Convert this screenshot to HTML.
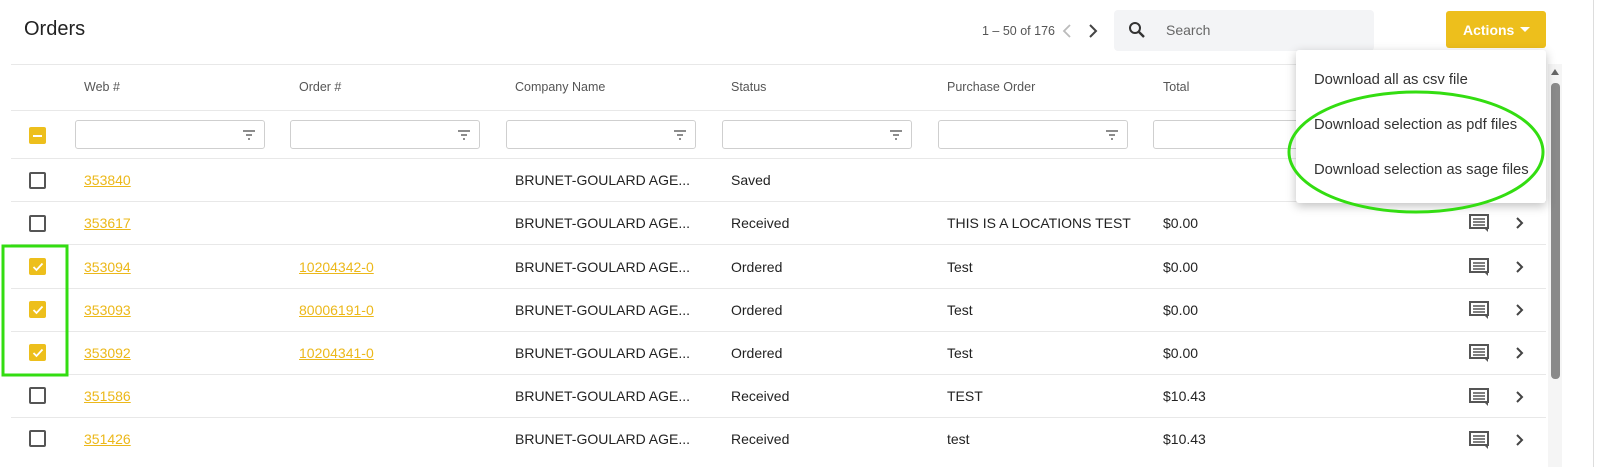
<!DOCTYPE html>
<html><head><style>
*{box-sizing:border-box;margin:0;padding:0}
body{width:1599px;height:467px;overflow:hidden;background:#fff;font-family:"Liberation Sans",sans-serif;color:#222;position:relative}
.a{position:absolute}
.t{font-size:14px;white-space:nowrap}
.h{font-size:12.5px;color:#555}
.hl{position:absolute;left:11px;width:1535px;height:1px;background:#e8e8e8}
.cb{position:absolute;left:29px;width:17px;height:17px;border:2px solid #555;border-radius:2px}
.cbk{background:#edbf1c;border-color:#edbf1c}
.lnk{color:#ecb81a;text-decoration:underline}
.fi{position:absolute;top:120px;height:29px;width:190px;border:1px solid #cfcfcf;border-radius:3px}
.fi svg{position:absolute;right:8px;top:8px}
</style></head><body>
<div class="a" style="left:24px;top:18px;font-size:20px;color:#222">Orders</div>
<div class="a" style="left:982px;top:24px;font-size:12.5px;color:#555">1 – 50 of 176</div>
<svg class="a" style="left:1060px;top:22px" width="14" height="18"><path d="M10 3L4 9l6 6" fill="none" stroke="#bbb" stroke-width="1.8"/></svg>
<svg class="a" style="left:1086px;top:22px" width="14" height="18"><path d="M4 3l6 6-6 6" fill="none" stroke="#444" stroke-width="2"/></svg>
<div class="a" style="left:1114px;top:10px;width:260px;height:41px;background:#f3f4f6;border-radius:4px"></div>
<svg class="a" style="left:1128px;top:21px" width="18" height="18"><circle cx="7" cy="7" r="5" fill="none" stroke="#333" stroke-width="2"/><path d="M11 11l5 5" stroke="#333" stroke-width="2.4"/></svg>
<div class="a t" style="left:1166px;top:22px;color:#666">Search</div>
<div class="a" style="left:1446px;top:11px;width:100px;height:37px;background:#edbf1c;border-radius:3px"></div>
<div class="a" style="left:1463px;top:22px;font-size:14px;font-weight:bold;color:#fff">Actions</div>
<svg class="a" style="left:1520px;top:27px" width="10" height="6"><path d="M0 0h10L5 5z" fill="#fff"/></svg>

<div class="hl" style="top:64px"></div>
<div class="a h" style="left:84px;top:80px">Web #</div>
<div class="a h" style="left:299px;top:80px">Order #</div>
<div class="a h" style="left:515px;top:80px">Company Name</div>
<div class="a h" style="left:731px;top:80px">Status</div>
<div class="a h" style="left:947px;top:80px">Purchase Order</div>
<div class="a h" style="left:1163px;top:80px">Total</div>
<div class="hl" style="top:110px"></div>
<div class="cb cbk" style="top:127px;border-radius:2px"><div style="position:absolute;left:2px;top:5.5px;width:9px;height:2px;background:#fff"></div></div>
<div class="fi" style="left:75px"><svg width="14" height="12"><path d="M1 2h12M4 6h6M6 10h2" stroke="#666" stroke-width="1.4"/></svg></div>
<div class="fi" style="left:290px"><svg width="14" height="12"><path d="M1 2h12M4 6h6M6 10h2" stroke="#666" stroke-width="1.4"/></svg></div>
<div class="fi" style="left:506px"><svg width="14" height="12"><path d="M1 2h12M4 6h6M6 10h2" stroke="#666" stroke-width="1.4"/></svg></div>
<div class="fi" style="left:722px"><svg width="14" height="12"><path d="M1 2h12M4 6h6M6 10h2" stroke="#666" stroke-width="1.4"/></svg></div>
<div class="fi" style="left:938px"><svg width="14" height="12"><path d="M1 2h12M4 6h6M6 10h2" stroke="#666" stroke-width="1.4"/></svg></div>
<div class="fi" style="left:1153px"></div>
<div class="hl" style="top:158px"></div>

<div class="cb" style="top:172px"></div><div class="a t lnk" style="left:84px;top:172px">353840</div><div class="a t" style="left:515px;top:172px">BRUNET-GOULARD AGE...</div><div class="a t" style="left:731px;top:172px">Saved</div>
<div class="hl" style="top:201px"></div>
<div class="cb" style="top:215px"></div><div class="a t lnk" style="left:84px;top:215px">353617</div><div class="a t" style="left:515px;top:215px">BRUNET-GOULARD AGE...</div><div class="a t" style="left:731px;top:215px">Received</div><div class="a t" style="left:947px;top:215px">THIS IS A LOCATIONS TEST</div><div class="a t" style="left:1163px;top:215px">$0.00</div>
<div class="hl" style="top:244px"></div>
<div class="cb cbk" style="top:258px"><svg style="position:absolute;left:1px;top:1px" width="12" height="12"><path d="M1.5 6l3 3 6-6.5" fill="none" stroke="#fff" stroke-width="1.8"/></svg></div><div class="a t lnk" style="left:84px;top:259px">353094</div><div class="a t lnk" style="left:299px;top:259px">10204342-0</div><div class="a t" style="left:515px;top:259px">BRUNET-GOULARD AGE...</div><div class="a t" style="left:731px;top:259px">Ordered</div><div class="a t" style="left:947px;top:259px">Test</div><div class="a t" style="left:1163px;top:259px">$0.00</div>
<div class="hl" style="top:288px"></div>
<div class="cb cbk" style="top:301px"><svg style="position:absolute;left:1px;top:1px" width="12" height="12"><path d="M1.5 6l3 3 6-6.5" fill="none" stroke="#fff" stroke-width="1.8"/></svg></div><div class="a t lnk" style="left:84px;top:302px">353093</div><div class="a t lnk" style="left:299px;top:302px">80006191-0</div><div class="a t" style="left:515px;top:302px">BRUNET-GOULARD AGE...</div><div class="a t" style="left:731px;top:302px">Ordered</div><div class="a t" style="left:947px;top:302px">Test</div><div class="a t" style="left:1163px;top:302px">$0.00</div>
<div class="hl" style="top:331px"></div>
<div class="cb cbk" style="top:344px"><svg style="position:absolute;left:1px;top:1px" width="12" height="12"><path d="M1.5 6l3 3 6-6.5" fill="none" stroke="#fff" stroke-width="1.8"/></svg></div><div class="a t lnk" style="left:84px;top:345px">353092</div><div class="a t lnk" style="left:299px;top:345px">10204341-0</div><div class="a t" style="left:515px;top:345px">BRUNET-GOULARD AGE...</div><div class="a t" style="left:731px;top:345px">Ordered</div><div class="a t" style="left:947px;top:345px">Test</div><div class="a t" style="left:1163px;top:345px">$0.00</div>
<div class="hl" style="top:374px"></div>
<div class="cb" style="top:387px"></div><div class="a t lnk" style="left:84px;top:388px">351586</div><div class="a t" style="left:515px;top:388px">BRUNET-GOULARD AGE...</div><div class="a t" style="left:731px;top:388px">Received</div><div class="a t" style="left:947px;top:388px">TEST</div><div class="a t" style="left:1163px;top:388px">$10.43</div>
<div class="hl" style="top:417px"></div>
<div class="cb" style="top:430px"></div><div class="a t lnk" style="left:84px;top:431px">351426</div><div class="a t" style="left:515px;top:431px">BRUNET-GOULARD AGE...</div><div class="a t" style="left:731px;top:431px">Received</div><div class="a t" style="left:947px;top:431px">test</div><div class="a t" style="left:1163px;top:431px">$10.43</div>

<svg class="a" style="left:1469px;top:214px" width="60" height="240">
<g id="ic"><path d="M1 1h18v13H1z" fill="none" stroke="#555" stroke-width="2"/><path d="M4 5h12M4 8h12M4 11h12" stroke="#555" stroke-width="1.5"/><path d="M15 14l4 4v-4" fill="#555"/><path d="M48 4l5 5-5 5" fill="none" stroke="#444" stroke-width="2"/></g>
<use href="#ic" y="44"/><use href="#ic" y="87"/><use href="#ic" y="130"/><use href="#ic" y="174"/><use href="#ic" y="217"/>
</svg>

<div class="a" style="left:1548px;top:64px;width:14px;height:403px;background:#f5f5f5"></div>
<svg class="a" style="left:1550px;top:68px" width="10" height="8"><path d="M1 7h8L5 1z" fill="#666"/></svg>
<div class="a" style="left:1551px;top:83px;width:9px;height:296px;background:#8a8a8a;border-radius:4px"></div>
<div class="a" style="left:1593px;top:0;width:1px;height:467px;background:#ddd"></div>

<div class="a" style="left:1296px;top:50px;width:250px;height:153px;background:#fff;border-radius:3px;box-shadow:0 3px 10px rgba(0,0,0,.25)"></div>
<div class="a t" style="left:1314px;top:72px;color:#333;font-size:14.8px">Download all as csv file</div>
<div class="a t" style="left:1314px;top:117px;color:#333;font-size:14.8px">Download selection as pdf files</div>
<div class="a t" style="left:1314px;top:162px;color:#333;font-size:14.8px">Download selection as sage files</div>

<svg class="a" style="left:0;top:0" width="1599" height="467">
<ellipse cx="1416" cy="152" rx="127" ry="60" fill="none" stroke="#33dd11" stroke-width="3"/>
<rect x="3" y="246" width="64" height="129" fill="none" stroke="#33dd11" stroke-width="3"/>
</svg>
</body></html>
